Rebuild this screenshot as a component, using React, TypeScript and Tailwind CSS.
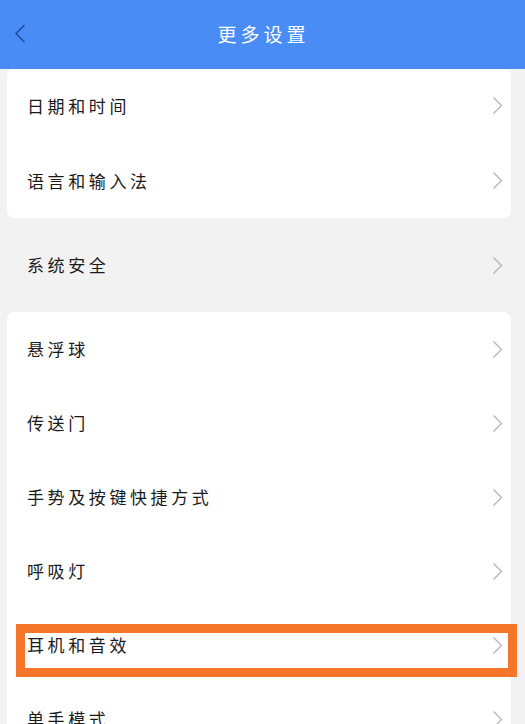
import React from "react";

const font = { fontFamily: '"Noto Sans CJK SC", "Noto Sans", sans-serif' };

function Chevron() {
  return (
    <svg width="11" height="19" viewBox="0 0 11 19" className="shrink-0">
      <path d="M1.5 1.5 L9.5 9.5 L1.5 17.5" fill="none" stroke="#b5b5b5" strokeWidth="1.3" />
    </svg>
  );
}

function Row({ label, highlight, tall }: { label: string; highlight?: boolean; tall?: boolean }) {
  return (
    <div
      className={`relative flex items-center justify-between pl-[20px] pr-[8px] ${tall ? "h-[75px]" : "h-[74px]"}`}
    >
      <span className="text-[17px] tracking-[3.6px] text-[#1a1a1a]">{label}</span>
      <Chevron />
      {highlight && (
        <div className="pointer-events-none absolute left-[9px] right-[-6px] top-[16px] h-[53px] border-[9px] border-[#f5752b]" />
      )}
    </div>
  );
}

export default function App() {
  return (
    <div className="h-[724px] w-[525px] overflow-hidden bg-[#f2f2f2]" style={font}>
      <div className="relative flex h-[69px] items-center justify-center bg-[#4a8cf6]">
        <svg width="12" height="19" viewBox="0 0 12 19" className="absolute left-[14px] top-[24px]">
          <path d="M10.5 1 L2 9.5 L10.5 18" fill="none" stroke="#1d4e9e" strokeWidth="1.6" />
        </svg>
        <span className="pl-[2px] text-[19px] tracking-[4px] text-white">更多设置</span>
      </div>
      <div className="ml-[7px] mr-[14px] rounded-[8px] bg-white -mt-[1px]">
        <Row label="日期和时间" tall />
        <Row label="语言和输入法" tall />
      </div>
      <div className="flex h-[94px] items-center justify-between pl-[27px] pr-[22px]">
        <span className="text-[17px] tracking-[3.6px] text-[#1a1a1a]">系统安全</span>
        <Chevron />
      </div>
      <div className="ml-[7px] mr-[14px] rounded-[8px] bg-white">
        <Row label="悬浮球" />
        <Row label="传送门" />
        <Row label="手势及按键快捷方式" />
        <Row label="呼吸灯" />
        <Row label="耳机和音效" highlight />
        <Row label="单手模式" />
      </div>
    </div>
  );
}
